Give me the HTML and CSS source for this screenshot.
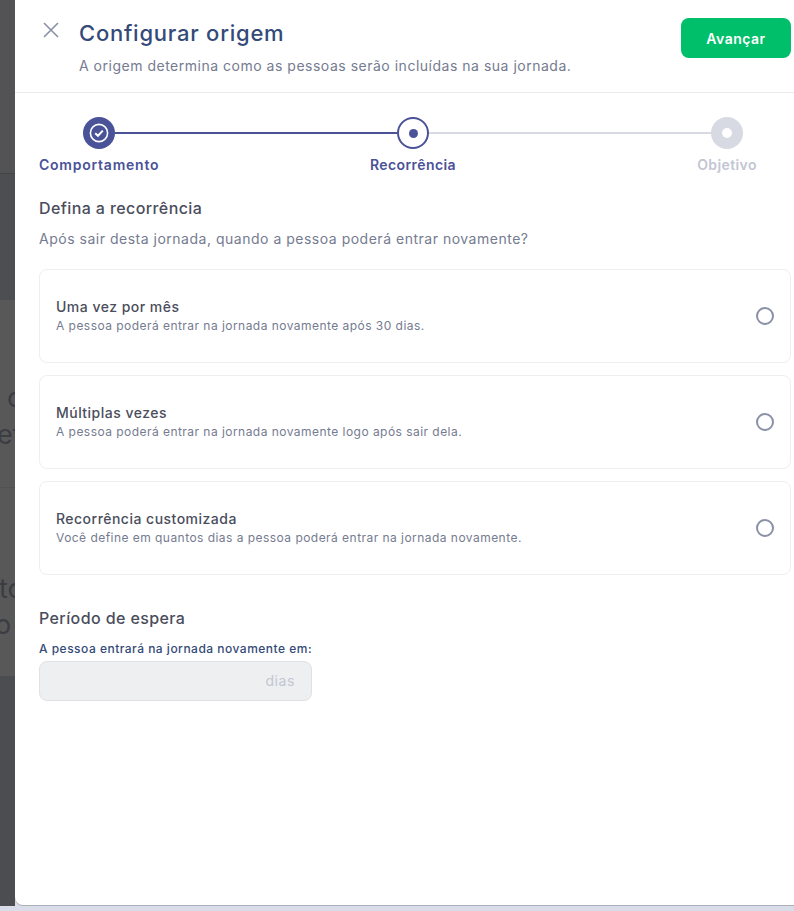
FILE: index.html
```html
<!DOCTYPE html>
<html lang="pt-BR">
<head>
    <meta charset="UTF-8">
    <title>Configurar origem</title>
    <link rel="stylesheet" href="styles.css">
</head>
<body>
    <div class="backdrop">
        <div class="backdrop-band band-top"></div>
        <div class="backdrop-band band-mid"></div>
        <div class="backdrop-band band-text"><span class="ghost ghost-a">c</span><span class="ghost ghost-b">et</span></div>
        <div class="backdrop-band band-text2"><span class="ghost ghost-c">to</span><span class="ghost ghost-d">o</span></div>
        <div class="backdrop-band band-end"></div>
    </div>

    <div class="drawer">
        <header class="drawer-header">
            <svg class="close-icon" width="16" height="16" viewBox="0 0 16 16">
                <path d="M1 1L15 15M15 1L1 15" stroke="#8a90a6" stroke-width="1.6" fill="none"/>
            </svg>
            <div class="header-text">
                <h1>Configurar origem</h1>
                <p>A origem determina como as pessoas serão incluídas na sua jornada.</p>
            </div>
            <button class="btn-next">Avançar</button>
        </header>

        <div class="stepper">
            <div class="step-track">
                <span class="step-dot step-done">
                    <svg width="22" height="22" viewBox="0 0 22 22">
                        <circle cx="11" cy="11" r="8.6" fill="none" stroke="#fff" stroke-width="1.6"/>
                        <path d="M7.2 11.2L10 13.8L14.8 8.6" fill="none" stroke="#fff" stroke-width="2"/>
                    </svg>
                </span>
                <span class="step-line line-on"></span>
                <span class="step-dot step-current"><i></i></span>
                <span class="step-line line-off"></span>
                <span class="step-dot step-next"><i></i></span>
            </div>
            <div class="step-labels">
                <span class="on wide">Comportamento</span>
                <span class="on">Recorrência</span>
                <span class="off">Objetivo</span>
            </div>
        </div>

        <section class="content">
            <h2>Defina a recorrência</h2>
            <p class="question">Após sair desta jornada, quando a pessoa poderá entrar novamente?</p>

            <div class="option-list">
                <div class="option">
                    <div>
                        <h3>Uma vez por mês</h3>
                        <p>A pessoa poderá entrar na jornada novamente após 30 dias.</p>
                    </div>
                    <span class="radio"></span>
                </div>
                <div class="option">
                    <div>
                        <h3>Múltiplas vezes</h3>
                        <p>A pessoa poderá entrar na jornada novamente logo após sair dela.</p>
                    </div>
                    <span class="radio"></span>
                </div>
                <div class="option">
                    <div>
                        <h3>Recorrência customizada</h3>
                        <p>Você define em quantos dias a pessoa poderá entrar na jornada novamente.</p>
                    </div>
                    <span class="radio"></span>
                </div>
            </div>

            <h2 class="wait-title">Período de espera</h2>
            <label class="wait-label">A pessoa entrará na jornada novamente em:</label>
            <div class="wait-input">dias</div>
        </section>
    </div>
</body>
</html>
```

FILE: styles.css
```css
html, body {
    margin: 0;
    height: 911px;
    overflow: hidden;
}

body {
    position: relative;
    font-family: "Inter", "Liberation Sans", sans-serif;
    background-color: #d9dde9;
}

/* page behind the drawer, only a thin strip shows */
.backdrop {
    position: absolute;
    left: 0;
    top: 0;
    width: 15px;
    height: 906px;
    display: flex;
    flex-direction: column;
    overflow: hidden;
}

.backdrop-band {
    position: relative;
    flex: none;
}

.band-top {
    height: 173px;
    background-color: #535355;
    border-bottom: 1px solid #444548;
}

.band-mid {
    height: 126px;
    background-color: #4c4e52;
}

.band-text {
    height: 187px;
    background-color: #585858;
    border-bottom: 1px solid #525252;
}

.band-text2 {
    height: 188px;
    background-color: #585858;
}

.band-end {
    height: 230px;
    background-color: #4b4d50;
}

.ghost {
    position: absolute;
    font-size: 27px;
    line-height: 30px;
    color: #3b3d42;
}

.ghost-a { left: 7px; top: 83px; }
.ghost-b { left: -3px; top: 120px; }
.ghost-c { left: -1px; top: 86px; }
.ghost-d { left: -5px; top: 122px; }

.drawer {
    position: absolute;
    left: 15px;
    top: 0;
    right: 0;
    height: 905px;
    box-sizing: border-box;
    background-color: #fff;
    border-bottom-left-radius: 8px;
    box-shadow: 0 1px 0 #aeb0b8;
}

.drawer-header {
    display: flex;
    align-items: flex-start;
    height: 93px;
    box-sizing: border-box;
    padding: 18px 3px 0 28px;
    border-bottom: 1px solid #ebebeb;
}

.close-icon {
    margin-top: 4px;
    flex: none;
}

.header-text {
    flex: 1;
    margin-left: 20px;
}

h1 {
    margin: 0;
    font-size: 22px;
    line-height: 30px;
    font-weight: 500;
    letter-spacing: 0.76px;
    color: #344a78;
}

.header-text p {
    margin: 8px 0 0;
    font-size: 14px;
    line-height: 20px;
    letter-spacing: 0.51px;
    color: #757b90;
}

.btn-next {
    width: 110px;
    height: 40px;
    border: none;
    border-radius: 8px;
    background-color: #00bf6a;
    color: #fff;
    font-family: inherit;
    font-size: 14px;
    font-weight: 600;
    letter-spacing: 0.5px;
}

.stepper {
    padding: 24px 7px 0 24px;
}

.step-track {
    display: flex;
    align-items: center;
    padding: 0 44px;
}

.step-dot {
    width: 32px;
    height: 32px;
    box-sizing: border-box;
    border-radius: 50%;
    flex: none;
    display: flex;
    align-items: center;
    justify-content: center;
}

.step-done {
    background-color: #4a5298;
}

.step-current {
    border: 2px solid #4a5298;
}

.step-current i {
    width: 9px;
    height: 9px;
    border-radius: 50%;
    background-color: #4a5298;
}

.step-next {
    background-color: #d8dae3;
}

.step-next i {
    width: 10px;
    height: 10px;
    border-radius: 50%;
    background-color: #fff;
}

.step-line {
    flex: 1;
    height: 2px;
}

.line-on {
    background-color: #4a5298;
}

.line-off {
    background-color: #d8dae3;
}

.step-labels {
    display: grid;
    grid-template-columns: repeat(3, 120px);
    justify-content: space-between;
    margin-top: 6px;
    font-size: 14px;
    line-height: 20px;
    font-weight: 600;
    letter-spacing: 0.4px;
    text-align: center;
    white-space: nowrap;
}

.step-labels .wide {
    letter-spacing: 0.76px;
}

.step-labels .on {
    color: #4a5298;
}

.step-labels .off {
    color: #c3c6d3;
}

.content {
    padding: 22px 3px 0 24px;
}

h2 {
    margin: 0;
    font-size: 16px;
    line-height: 22px;
    font-weight: 500;
    letter-spacing: 0.4px;
    color: #4a4d5c;
}

.question {
    margin: 10px 0 0;
    font-size: 14px;
    line-height: 20px;
    letter-spacing: 0.51px;
    color: #757b90;
}

.option-list {
    display: flex;
    flex-direction: column;
    gap: 12px;
    margin-top: 20px;
}

.option {
    height: 94px;
    box-sizing: border-box;
    display: flex;
    align-items: center;
    justify-content: space-between;
    padding: 0 16px;
    border: 1px solid #eeeff2;
    border-radius: 8px;
}

.option h3 {
    margin: 0;
    font-size: 14px;
    line-height: 18px;
    font-weight: 500;
    letter-spacing: 0.48px;
    color: #4a4d5c;
}

.option p {
    margin: 2px 0 0;
    font-size: 12px;
    line-height: 16px;
    letter-spacing: 0.46px;
    color: #757b90;
}

.radio {
    width: 18px;
    height: 18px;
    box-sizing: border-box;
    border: 2px solid #8a90a6;
    border-radius: 50%;
}

.wait-title {
    margin-top: 32px;
}

.wait-label {
    display: block;
    margin-top: 12px;
    font-size: 12px;
    line-height: 16px;
    font-weight: 500;
    letter-spacing: 0.49px;
    color: #344a78;
}

.wait-input {
    width: 273px;
    height: 40px;
    box-sizing: border-box;
    margin-top: 4px;
    padding-right: 16px;
    border: 1px solid #e0e1e6;
    border-radius: 8px;
    background-color: #eeeff1;
    color: #c3c6d3;
    font-size: 14px;
    line-height: 38px;
    letter-spacing: 0.6px;
    text-align: right;
}
```
